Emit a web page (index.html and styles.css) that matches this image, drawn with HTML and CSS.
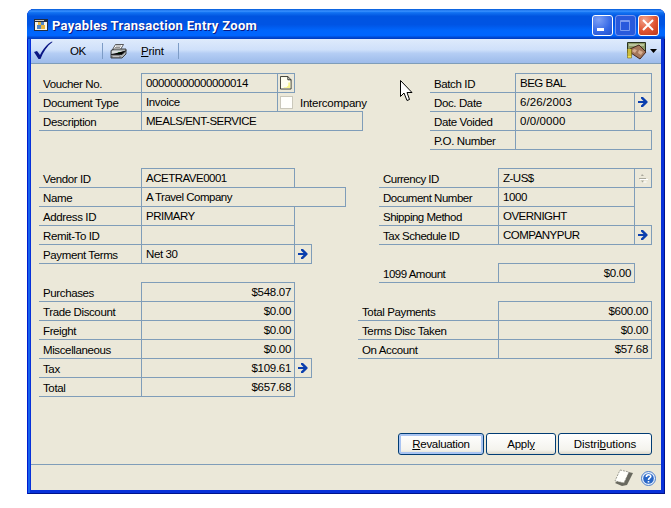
FILE: index.html
```html
<!DOCTYPE html>
<html lang="en">
<head>
<meta charset="utf-8">
<title>Payables Transaction Entry Zoom</title>
<link rel="stylesheet" href="styles.css">
</head>
<body>
<svg class="defs" width="0" height="0">
  <symbol id="arrow" viewBox="0 0 10 10"><path d="M0 4h5.5L3 1.5V0h2l4.6 4.6v.8L5 10H3V8.500L5.500 6H0z" fill="#0b3fae"/></symbol>
</svg>
<div class="window">
  <header class="titlebar">
    <svg class="app-icon" width="14" height="12" viewBox="0 0 14 12" shape-rendering="crispEdges"><path fill="#222d42" d="M0 0h14v12H0z"/><path fill="#f4f4ea" d="M1 3h12v8H1z"/><path fill="#d4d0c8" d="M1 1h9v1H1z"/><path fill="#e7b640" d="M4 3h3v3H4zM7 6h4v4H7z"/><path fill="#4c86ca" d="M7 3h3v3H7zM3 6h4v4H3z"/></svg>
    <h1>Payables Transaction Entry Zoom</h1>
    <div class="controls">
      <span class="ctl"><svg width="21" height="21"><path fill="#fff" d="M5 13h7v3H5z"/></svg></span>
      <span class="ctl max"><svg width="21" height="21"><path fill="none" stroke="#7c9cf0" d="M5.500 5.500h9v10h-9zM5.500 6.500h9"/></svg></span>
      <span class="ctl close"><svg width="21" height="21"><path fill="none" stroke="#fff" stroke-width="2" d="M5 5l10 10M15 5L5 15"/></svg></span>
    </div>
  </header>
  <nav class="toolbar">
    <svg class="check" width="19" height="19" viewBox="0 0 19 19"><path fill="#0a1684" d="M0 11l3-1 3 4C9 8 13 3 18 .5l.5.5C13 5 9 11 6.500 18H4.500z"/></svg>
    <span class="ok">OK</span><i class="sep"></i>
    <svg class="printer" width="17" height="15" viewBox="0 0 17 15"><path fill="#fff" stroke="#333" stroke-width=".8" d="M5.500.5h8l-3 5h-8z"/><path stroke="#777" stroke-width=".8" d="M6 2h5M5 3.500h5"/><path fill="#aeb3b5" stroke="#222" stroke-width=".8" d="M1 6.500L4 5h12v5l-4 4H1z"/><path fill="#d9dddd" d="M2 7h10v2H2z"/><path fill="#3fc14b" d="M8 8h4v2H8z"/><path stroke="#222" d="M1 10.500h11l4-4"/><path fill="#fff" stroke="#333" stroke-width=".6" d="M2 12h8v1.500H2z"/></svg>
    <span class="print"><u>P</u>rint</span><i class="sep"></i>
    <svg class="money" width="20" height="18" viewBox="0 0 20 18"><path fill="#8c9b68" stroke="#29321f" d="M.5.500h18v10H.5z"/><path fill="#bac39c" d="M2 2h15v2H2z"/><path fill="#a4775b" stroke="#43271c" d="M3 7l9-4 7 7-6 7-9-6z"/><path fill="#d6ae91" d="M7 7l3 1-2 3-3-2zM12 8l4 2-2 3-3-2z"/><path fill="#f2e251" stroke="#746515" stroke-width=".6" d="M.5 7h4v9h-4z"/><path stroke="#746515" stroke-width=".6" d="M0 9h5M0 11h5M0 13h5"/></svg>
    <svg class="caret" width="7" height="4"><path d="M0 0h7L3.500 4z"/></svg>
  </nav>
  <main class="body">
    <div class="columns">
      <div class="left">
        <section class="group">
          <div class="row"><label>Voucher No.</label><output class="w137 digits">00000000000000014</output><span class="cell"><svg width="12" height="14" viewBox="0 0 13 15"><path fill="#fffff0" stroke="#34342a" d="M.5.500h8l3.500 3.500v10H.5z"/><path fill="#f8f58d" d="M9 7h2v6H4v-1h3l2-2z"/><path fill="none" stroke="#222" d="M8.500.5V4H12"/></svg></span></div>
          <div class="row"><label>Document Type</label><output class="w137">Invoice</output><span class="checkbox"></span><span class="inter">Intercompany</span></div>
          <div class="row"><label>Description</label><output class="w222 caps">MEALS/ENT-SERVICE</output></div>
        </section>
        <section class="group vendor">
          <div class="row"><label>Vendor ID</label><output class="w154 caps">ACETRAVE0001</output></div>
          <div class="row"><label>Name</label><output class="w205">A Travel Company</output></div>
          <div class="row"><label>Address ID</label><output class="w154 caps">PRIMARY</output></div>
          <div class="row"><label>Remit-To ID</label><output class="w154"></output></div>
          <div class="row"><label>Payment Terms</label><output class="w154">Net 30</output><span class="cell"><svg width="10" height="10"><use href="#arrow"/></svg></span></div>
        </section>
        <section class="group money-group">
          <div class="row"><label>Purchases</label><output class="w154 num">$548.07</output></div>
          <div class="row"><label>Trade Discount</label><output class="w154 num">$0.00</output></div>
          <div class="row"><label>Freight</label><output class="w154 num">$0.00</output></div>
          <div class="row"><label>Miscellaneous</label><output class="w154 num">$0.00</output></div>
          <div class="row"><label>Tax</label><output class="w154 num">$109.61</output><span class="cell"><svg width="10" height="10"><use href="#arrow"/></svg></span></div>
          <div class="row"><label>Total</label><output class="w154 num">$657.68</output></div>
        </section>
      </div>
      <div class="right">
        <section class="group batch">
          <div class="row"><label>Batch ID</label><output class="w137 caps">BEG BAL</output></div>
          <div class="row"><label>Doc. Date</label><output class="w120 date">6/26/2003</output><span class="cell"><svg width="10" height="10"><use href="#arrow"/></svg></span></div>
          <div class="row"><label>Date Voided</label><output class="w120 date">0/0/0000</output></div>
          <div class="row"><label>P.O. Number</label><output class="w137"></output></div>
        </section>
        <section class="group currency">
          <div class="row"><label>Currency ID</label><output class="w137 caps">Z-US$</output><span class="cell"><svg width="10" height="10" viewBox="0 0 10 10"><path stroke="#fff" d="M2 6.500h8M5.500 9h3"/><path stroke="#aaa99c" d="M1 5.500h7"/><path fill="#aaa99c" d="M4 1l2 2H3zM3 7.500h3L4.500 9.500z"/></svg></span></div>
          <div class="row"><label>Document Number</label><output class="w137">1000</output></div>
          <div class="row"><label>Shipping Method</label><output class="w137 caps">OVERNIGHT</output></div>
          <div class="row"><label>Tax Schedule ID</label><output class="w137 caps">COMPANYPUR</output><span class="cell"><svg width="10" height="10"><use href="#arrow"/></svg></span></div>
        </section>
        <section class="group currency">
          <div class="row"><label>1099 Amount</label><output class="w137 num">$0.00</output></div>
        </section>
        <section class="group totals">
          <div class="row"><label>Total Payments</label><output class="w154 num">$600.00</output></div>
          <div class="row"><label>Terms Disc Taken</label><output class="w154 num">$0.00</output></div>
          <div class="row"><label>On Account</label><output class="w154 num">$57.68</output></div>
        </section>
      </div>
    </div>
    <div class="buttons">
      <button class="reval"><span><u>R</u>evaluation</span></button>
      <button class="apply"><span>Appl<u>y</u></span></button>
      <button class="dist"><span>Distri<u>b</u>utions</span></button>
    </div>
  </main>
  <footer class="status">
    <svg width="20" height="18" viewBox="0 0 20 18"><path fill="#69695f" d="M14 3l5 1-6 12-5 1-7-3z"/><path fill="#fffffb" stroke="#77776d" stroke-width=".7" stroke-dasharray="2 1" d="M6 1l9 2-5 11-9-2z"/></svg>
    <svg width="15" height="15" viewBox="0 0 15 15"><circle cx="7.500" cy="7.500" r="7" fill="#e7f0fc" stroke="#4c7dc8"/><circle cx="7.500" cy="7.500" r="5.300" fill="#2866c7"/><path fill="none" stroke="#fff" stroke-width="1.600" d="M5.300 6c0-3 4.500-3 4.500-.5C9.800 7 7.500 7 7.500 9M7.500 10v1.500"/></svg>
  </footer>
</div>
<svg class="cursor" width="13" height="22" viewBox="0 0 13 22"><path fill="#fff" stroke="#000" d="M.5.500v16l3.500-3.500 3 7.500 2.500-1L7 12.500h5z"/></svg>
</body>
</html>
```
FILE: styles.css
```css
* { box-sizing: border-box; }
body { margin: 0; padding: 9px 6px 14px 27px; height: 508px; background: #fff; color: #000; font: 11.5px/14px "Liberation Sans", sans-serif; letter-spacing: -.38px; overflow: hidden; }
svg { display: block; flex: none; }
.defs { position: absolute; }
.window { width: 638px; height: 485px; padding: 0 4px 4px; border-radius: 7px 7px 0 0; background: #0831d9; box-shadow: inset 1px 0 #0019cf, inset -1px -1px #00138c, inset 3px 0 #1661ed; display: flex; flex-direction: column; overflow: hidden; }
.titlebar { height: 30px; margin: 0 -4px; padding: 3px 6px 0 7px; display: flex; align-items: center; flex: none; background: linear-gradient(#0058d8 0, #3a91ff 7%, #1272f2 12%, #0054e0 24%, #0054e4 52%, #0066fc 72%, #0066ff 88%, #0045cc 96%, #003cc0); }
.app-icon { margin-top: -1px; }
h1 { margin: 0 auto 0 4px; font: bold 13px/16px Roboto, sans-serif; letter-spacing: .3px; color: #fff; text-shadow: 1px 1px #0a1883; white-space: nowrap; }
.controls { display: flex; gap: 2px; }
.ctl { width: 21px; height: 21px; border: 1px solid #fff; border-radius: 3px; background: radial-gradient(circle at 30% 20%, #7da0f5, #3568e6 60%, #2350c8); }
.ctl svg { margin: -1px; }
.max { border-color: #7795ee; background: #2859dc; }
.close { background: radial-gradient(circle at 30% 20%, #f2a38c, #e05431 55%, #bc371b); }
.toolbar { height: 25px; flex: none; display: flex; align-items: center; background: linear-gradient(#dfebfc, #cfe0fa 45%, #b4cdf4 60%, #9dbbea); border-bottom: 1px solid #7f9db9; padding: 0 4px 0 3px; }
.check { margin-top: -1px; }
.ok { margin-left: 17px; width: 32px; }
.print { margin-left: 14px; width: 37px; letter-spacing: -.2px; }
.printer { margin-left: 7px; }
.sep { width: 1px; height: 16px; background: #7d9cc6; }
.money { margin-left: auto; }
.caret { margin-left: 3px; }
.body { flex: 1; background: #ebe8d9; padding: 9px 9px 9px 8px; display: flex; flex-direction: column; justify-content: space-between; }
.columns { display: flex; justify-content: space-between; }
.left { width: 310px; }
.right { display: flex; flex-direction: column; align-items: flex-end; }
.vendor { margin-top: 37px; }
.money-group { margin-top: 18px; }
.right .group + .group { margin-top: 18px; }
.row { display: flex; height: 20px; white-space: nowrap; }
.row + .row { margin-top: -1px; }
label { width: 102px; border-bottom: 1px solid #7f9db9; padding: 4px 0 0 4px; flex: none; }
output { border: 1px solid #7f9db9; padding: 2px 4px 0; flex: none; }
.batch { width: 222px; } .batch label { width: 85px; }
.currency { width: 273px; } .currency label { width: 119px; letter-spacing: -.5px; }
.totals { width: 294px; } .totals label { width: 140px; }
.w120 { width: 120px; } .w137 { width: 137px; } .w154 { width: 154px; } .w205 { width: 205px; } .w222 { width: 222px; }
.w205 { letter-spacing: -.5px; }
.num { text-align: right; padding-right: 3px; letter-spacing: -.3px; }
.digits { letter-spacing: -.4px; }
.caps { letter-spacing: -.5px; }
.date { letter-spacing: .1px; }
.cell { width: 18px; height: 20px; margin-left: -1px; border: 1px solid #7f9db9; display: grid; place-items: center; flex: none; }
.checkbox { width: 13px; height: 13px; margin: 4px 0 0 2px; background: #fffffc; border: 1px solid #cac8bb; flex: none; }
.inter { padding: 4px 0 0 7px; letter-spacing: -.25px; }
.buttons { display: flex; justify-content: flex-end; gap: 2px; }
button { height: 22px; padding: 0; font: inherit; letter-spacing: -.3px; color: #000; border: 1px solid #003c74; border-radius: 3px; background: linear-gradient(#fff, #f4f3ed 80%, #dcd8cb); }
.reval { width: 86px; box-shadow: inset 0 0 0 2px #a9c4f2; }
.apply { width: 70px; } .dist { width: 94px; letter-spacing: -.05px; }
.status { height: 26px; flex: none; background: #ebe8d9; border-top: 1px solid #7f9db9; display: flex; align-items: center; justify-content: flex-end; gap: 7px; padding: 1px 5px 0; }
.cursor { position: absolute; left: 400px; top: 80px; }
```
